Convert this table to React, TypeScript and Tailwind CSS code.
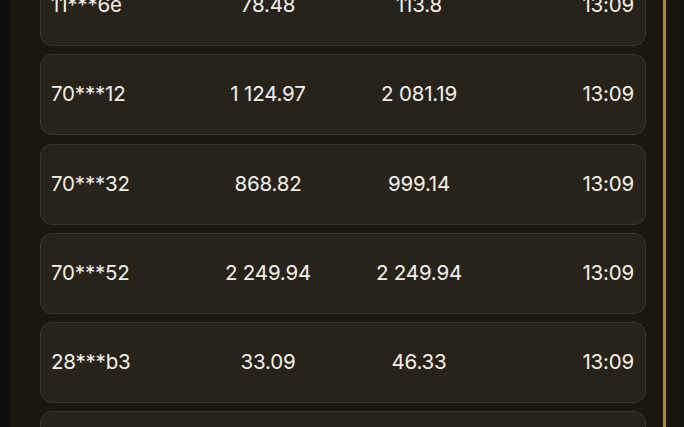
import React from "react";

// ── Data ──────────────────────────────────────────────────────────────────────

type Row = { user: string; bet: string; win: string; time: string };

const rows: Row[] = [
  { user: "11***6e", bet: "78.48", win: "113.8", time: "13:09" },
  { user: "70***12", bet: "1 124.97", win: "2 081.19", time: "13:09" },
  { user: "70***32", bet: "868.82", win: "999.14", time: "13:09" },
  { user: "70***52", bet: "2 249.94", win: "2 249.94", time: "13:09" },
  { user: "28***b3", bet: "33.09", win: "46.33", time: "13:09" },
  { user: "41***0a", bet: "12.50", win: "18.75", time: "13:09" },
];

// ── Row card ──────────────────────────────────────────────────────────────────

function BetRow({ row }: { row: Row }) {
  return (
    <div className="h-[81px] shrink-0 rounded-[12px] border border-[#3a362d] bg-[#27231b] pl-[10px] pr-[11px] grid grid-cols-[141px_152px_150px_1fr] items-center text-[20.5px] text-[#f4f0e8] tracking-[-0.2px]">
      <span className="text-left">{row.user}</span>
      <span className="text-center">{row.bet}</span>
      <span className="text-center">{row.win}</span>
      <span className="text-right">{row.time}</span>
    </div>
  );
}

// ── Main ──────────────────────────────────────────────────────────────────────

export default function App() {
  return (
    <div
      className="w-[684px] h-[427px] overflow-hidden flex bg-[#0f0e0c]"
      style={{ fontFamily: "Inter, 'Noto Sans', sans-serif" }}
    >
      {/* left gutter */}
      <div className="w-[10px] shrink-0 bg-[#0f0e0c]" />

      {/* list panel */}
      <div className="flex-1 bg-[#1b170f] pl-[30px] pr-[17px]">
        <div className="flex flex-col gap-[8.25px] mt-[-35px]">
          {rows.map((r, i) => (
            <BetRow key={i} row={r} />
          ))}
        </div>
      </div>

      {/* gold divider */}
      <div className="w-[3px] shrink-0 bg-[#a8873f]" />

      {/* right edge */}
      <div className="w-[18px] shrink-0 bg-gradient-to-r from-[#1a160f] to-[#121110]" />
    </div>
  );
}
